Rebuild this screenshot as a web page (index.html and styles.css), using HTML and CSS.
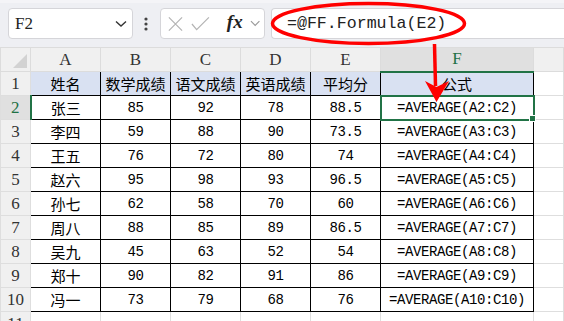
FILE: index.html
```html
<!DOCTYPE html>
<html lang="zh">
<head>
  <meta charset="UTF-8">
  <title>公式</title>
  <link rel="stylesheet" href="styles.css">
</head>
<body>
  <div class="toolbar">
    <div class="namebox">
      <span>F2</span>
      <svg class="chev" width="12" height="8" viewBox="0 0 12 8"><polyline points="1,1.5 6,6 11,1.5" fill="none" stroke="#333" stroke-width="1.4"/></svg>
    </div>
    <svg class="dots" width="27" height="31" viewBox="0 0 27 31">
      <circle cx="13" cy="11" r="1.6" fill="#444"/>
      <circle cx="13" cy="16" r="1.6" fill="#444"/>
      <circle cx="13" cy="21" r="1.6" fill="#444"/>
    </svg>
    <div class="fxbox">
      <svg width="18" height="18" viewBox="0 0 18 18"><path d="M2 2 L16 16 M16 2 L2 16" stroke="#b4b4b4" stroke-width="1.3" fill="none"/></svg>
      <svg width="20" height="18" viewBox="0 0 20 18"><polyline points="1,9 6,15 19,2" stroke="#b4b4b4" stroke-width="1.3" fill="none"/></svg>
      <span class="fx">fx</span>
      <svg width="11" height="7" viewBox="0 0 11 7"><polyline points="1,1 5.5,5.5 10,1" stroke="#999" stroke-width="1.2" fill="none"/></svg>
    </div>
    <div class="formula">=@FF.Formula(E2)</div>
  </div>

  <table class="sheet">
    <colgroup>
      <col style="width:30px"><col style="width:70px"><col style="width:70px"><col style="width:70px">
      <col style="width:70px"><col style="width:70px"><col style="width:153px"><col>
    </colgroup>
    <tr class="colhead">
      <th class="corner"><span class="tri"></span></th>
      <th>A</th><th>B</th><th>C</th><th>D</th><th>E</th><th class="cur">F</th><th></th>
    </tr>
    <tr class="title">
      <th>1</th>
      <td class="cn">姓名</td><td class="cn">数学成绩</td><td class="cn">语文成绩</td><td class="cn">英语成绩</td><td class="cn">平均分</td><td class="cn">公式</td><td class="empty"></td>
    </tr>
    <tr>
      <th class="cur">2</th>
      <td class="cn">张三</td><td>85</td><td>92</td><td>78</td><td>88.5</td><td class="sel">=AVERAGE(A2:C2)<span class="handle"></span></td><td class="empty"></td>
    </tr>
    <tr>
      <th>3</th>
      <td class="cn">李四</td><td>59</td><td>88</td><td>90</td><td>73.5</td><td>=AVERAGE(A3:C3)</td><td class="empty"></td>
    </tr>
    <tr>
      <th>4</th>
      <td class="cn">王五</td><td>76</td><td>72</td><td>80</td><td>74</td><td>=AVERAGE(A4:C4)</td><td class="empty"></td>
    </tr>
    <tr>
      <th>5</th>
      <td class="cn">赵六</td><td>95</td><td>98</td><td>93</td><td>96.5</td><td>=AVERAGE(A5:C5)</td><td class="empty"></td>
    </tr>
    <tr>
      <th>6</th>
      <td class="cn">孙七</td><td>62</td><td>58</td><td>70</td><td>60</td><td>=AVERAGE(A6:C6)</td><td class="empty"></td>
    </tr>
    <tr>
      <th>7</th>
      <td class="cn">周八</td><td>88</td><td>85</td><td>89</td><td>86.5</td><td>=AVERAGE(A7:C7)</td><td class="empty"></td>
    </tr>
    <tr>
      <th>8</th>
      <td class="cn">吴九</td><td>45</td><td>63</td><td>52</td><td>54</td><td>=AVERAGE(A8:C8)</td><td class="empty"></td>
    </tr>
    <tr>
      <th>9</th>
      <td class="cn">郑十</td><td>90</td><td>82</td><td>91</td><td>86</td><td>=AVERAGE(A9:C9)</td><td class="empty"></td>
    </tr>
    <tr>
      <th>10</th>
      <td class="cn">冯一</td><td>73</td><td>79</td><td>68</td><td>76</td><td>=AVERAGE(A10:C10)</td><td class="empty"></td>
    </tr>
    <tr class="blank">
      <th>11</th>
      <td class="empty"></td><td class="empty"></td><td class="empty"></td><td class="empty"></td><td class="empty"></td><td class="empty"></td><td class="empty"></td>
    </tr>
  </table>

  <!-- red mark drawn over the formula bar -->
  <svg class="annot" width="564" height="110" viewBox="0 0 564 110">
    <ellipse cx="368.5" cy="23.5" rx="96" ry="20" fill="none" stroke="#f00" stroke-width="3.5"/>
    <line x1="434.5" y1="44" x2="435.5" y2="86" stroke="#f00" stroke-width="3.5"/>
    <polygon points="425,81 436.5,87 449,81 436.5,102" fill="#f00"/>
  </svg>
</body>
</html>
```

FILE: styles.css
```css
body { margin:0; width:564px; height:321px; overflow:hidden; background:#fff; position:relative; font-family:"Liberation Mono", monospace; }

.toolbar { height:47px; box-sizing:border-box; padding:8px 0 0 8px; display:flex; align-items:flex-start; background:#eeeff3; border-top:3px solid #f4f4f7; padding-top:5px; }
.namebox { width:125px; height:31px; box-sizing:border-box; background:#fff; border:1px solid #d5d5d9; border-radius:4px; display:flex; align-items:center; justify-content:space-between; padding:0 5px 0 6px; }
.namebox span { font-family:"Liberation Serif", serif; font-size:17px; color:#222; }
.dots { flex:none; }
.fxbox { width:105px; height:31px; box-sizing:border-box; background:#fff; border:1px solid #d5d5d9; border-radius:4px; display:flex; align-items:center; gap:7px; padding:0 4px 0 6px; }
.fx { font-family:"Liberation Serif", serif; font-style:italic; font-weight:bold; font-size:19px; color:#222; margin-left:10px; margin-top:-3px; }
.formula { flex:1; height:31px; box-sizing:border-box; margin-left:6px; background:#fff; border:1px solid #d5d5d9; border-right:none; border-radius:4px 0 0 4px; padding-left:15px; font-size:16.6px; line-height:29px; color:#222; }

.sheet { border-collapse:collapse; table-layout:fixed; width:564px; }
.sheet tr { height:24px; }
.sheet th, .sheet td { padding:0; border:1px solid #dedede; text-align:center; white-space:nowrap; overflow:visible; }
.sheet th { background:#f0f0f0; font-family:"Liberation Serif", serif; font-weight:normal; font-size:17px; color:#333; }
.colhead th { border-color:#dcdcdc; }
.colhead th.cur { background:#d8d8d8; color:#1e7145; border-bottom:2px solid #217346; }
.sheet th.cur { background:#e0e0e0; color:#1e7145; border-right:2px solid #217346; }
.colhead th.cur { border-right:1px solid #dcdcdc; }
.corner { position:relative; }
.tri { position:absolute; right:3px; bottom:3px; width:0; height:0; border-left:14px solid transparent; border-bottom:14px solid #d2d2d2; }

.sheet td { border-color:#000; font-size:14px; letter-spacing:-0.4px; color:#000; }
.sheet td.cn { font-family:"Noto Sans CJK SC", sans-serif; font-size:15px; letter-spacing:0; }
.title td { background:#d9e1f2; }
.sheet td.empty { border-color:#dedede; background:#fff; border-left-color:#000; }
.blank td.empty { border-left-color:#dedede; border-top-color:#000; }
.blank td.empty:last-child { border-top-color:#dedede; }
.sheet td.empty + td.empty { border-left-color:#dedede; }

.sel { position:relative; outline:2px solid #217346; outline-offset:-1px; }
.handle { position:absolute; right:-3px; bottom:-3px; width:5px; height:5px; background:#217346; border:1px solid #fff; }

.annot { position:absolute; left:0; top:0; pointer-events:none; }
```
